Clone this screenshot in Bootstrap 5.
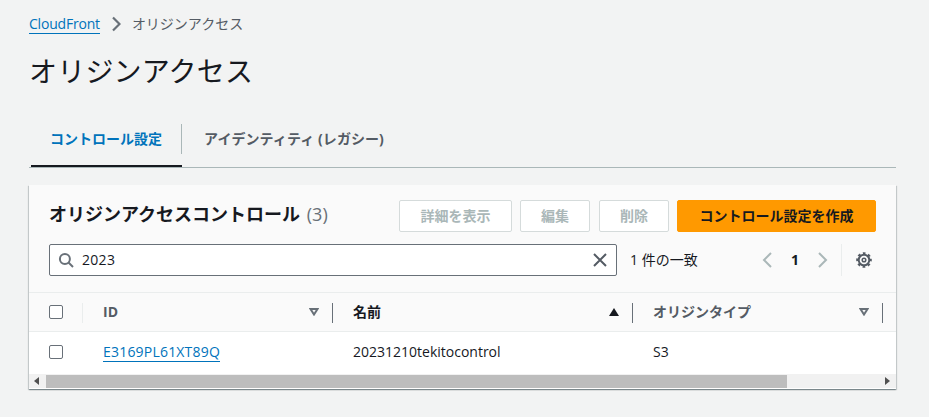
<!doctype html>
<html lang="ja"><head><meta charset="utf-8"><title>オリジンアクセス</title>
<link href="https://cdn.jsdelivr.net/npm/bootstrap@5.3.0/dist/css/bootstrap.min.css" rel="stylesheet">
<style>
html,body{height:417px;overflow:hidden}
body{background:#f2f3f3;color:#16191f;font:14px/20px "Open Sans","Noto Sans CJK JP",sans-serif}
a{color:#0073bb;text-decoration:none}
.wrap{padding:14px 33px 0 29px}
.crumbs{height:20px;display:flex;align-items:center;gap:11px;color:#545b64}
.crumbs a{border-bottom:1px solid #0073bb;line-height:19px;height:20px;letter-spacing:-.2px}
.ttl{font-size:28px;line-height:36px;font-weight:400;margin:19px 0 0;color:#16191f;letter-spacing:.2px}
.tabbar{margin-top:29px;height:50px;border-bottom:1px solid #aab7b8;display:flex;align-items:stretch}
.tabi{font-weight:700;color:#545b64;display:flex;align-items:flex-start;padding-top:11px;height:50px;position:relative;font-size:14px}
.tabi.on{color:#0073bb;margin-left:2px;width:151px;padding-left:19px;border-bottom:2px solid #16191f;height:49px}
.tabi.on::after{content:"";position:absolute;right:0;top:6px;height:30px;border-right:1px solid #aab7b8}
.tabi.off{padding-left:22px;letter-spacing:.08px}
.panel{margin-top:17px;background:#fff;box-shadow:0 1px 1px 0 rgba(0,28,36,.3),1px 1px 1px 0 rgba(0,28,36,.15),-1px 1px 1px 0 rgba(0,28,36,.15);height:204px;overflow:hidden}
.phead{background:#fafafa;height:108px;padding:15px 20px 0;border-bottom:1px solid #eaeded}
.toprow{display:flex;justify-content:space-between;align-items:flex-start;height:33px}
.ptitle{font-size:18px;font-weight:700;line-height:24px;margin:2px 0 0}
.ptitle span{font-weight:400;color:#687078;margin-left:2px}
.awsbtn{height:32px;padding:0 20px;font-size:14px;font-weight:700;border-radius:2px;border:1px solid #d5dbdb;background:#fff;color:#aab7b8;line-height:20px;--bs-btn-disabled-opacity:1;--bs-btn-disabled-bg:#fff;--bs-btn-disabled-border-color:#d5dbdb;--bs-btn-disabled-color:#aab7b8}
.awsbtn.wide{padding:0 20.5px}
.awsbtn.prim{background:#ff9900;border-color:#ff9900;color:#16191f;padding:0 21.5px;--bs-btn-hover-bg:#ec7211;--bs-btn-hover-border-color:#ec7211}
.btnset{display:flex;gap:8px}
.btnset .awsbtn:nth-child(3){margin-left:1px}
.findrow{display:flex;align-items:center;margin-top:11px;height:32px}
.findbox{flex:none;width:568px;height:32px;border:1px solid #687078;border-radius:2px;background:#fff;display:flex;align-items:center;padding:0 8px}
.findbox input{border:0;outline:0;flex:1;font:inherit;color:#16191f;padding:0 0 0 8px;background:transparent;min-width:0;letter-spacing:.3px}
.matches{flex:none;margin-left:13px;width:131px}
.pager{flex:none;display:flex;align-items:center;width:80px;justify-content:space-between;padding-right:12px;font-weight:700;font-size:14px}
.cog{flex:none;border-left:1px solid #eaeded;height:32px;width:44px;display:flex;align-items:center;justify-content:center}
.gridhead,.gridrow{display:grid;grid-template-columns:54px 250px 300px 250px 13px;width:867px}
.gridhead{background:#fafafa;height:39px;border-bottom:1px solid #eaeded}
.gridrow{height:41px;background:#fff;padding-bottom:2px}
.hc{display:flex;align-items:center;position:relative;padding-left:20px;font-weight:700;color:#545b64}
.hc.dark{color:#16191f}
.hc::after{content:"";position:absolute;right:0;top:10px;height:20px;border-right:1px solid #687078}
.hc.box::after{border-color:#eaeded}
.hc.last::after{display:none}
.hc svg{position:absolute;right:14px;top:15px}
.dc{display:flex;align-items:center;padding-left:20px;white-space:nowrap}
.dc a{border-bottom:1px solid #0073bb;line-height:19px;letter-spacing:.2px}
.tick{width:14px;height:14px;border:1px solid #687078;border-radius:2px;background:#fff;display:block}
.sbar{background:#f1f1f1;display:flex;align-items:center;border-top:1px solid #fff;box-sizing:content-box;height:14px}
.sbar .end{width:17px;padding-right:2px;display:flex;align-items:center;justify-content:center}
.sbar .thumb{height:13px;background:#bdbdbd;width:741px}
.sbar .rest{flex:1}
</style></head><body>
<div class="wrap">
 <nav class="crumbs"><a href="#">CloudFront</a>
  <svg width="10" height="16" viewBox="0 0 10 16" fill="none" stroke="#687078" stroke-width="2.200"><path d="M2 1.500L8.500 8 2 14.500"/></svg>
  <span>オリジンアクセス</span></nav>
 <h1 class="ttl">オリジンアクセス</h1>
 <div class="tabbar"><div class="tabi on">コントロール設定</div><div class="tabi off">アイデンティティ (レガシー)</div></div>
 <section class="panel">
  <div class="phead">
   <div class="toprow"><h2 class="ptitle">オリジンアクセスコントロール <span>(3)</span></h2>
    <div class="btnset"><button class="btn awsbtn wide" disabled>詳細を表示</button><button class="btn awsbtn" disabled>編集</button><button class="btn awsbtn" disabled>削除</button><button class="btn awsbtn prim">コントロール設定を作成</button></div></div>
   <div class="findrow">
    <div class="findbox">
     <svg width="16" height="16" viewBox="0 0 16 16" fill="none" stroke="#687078" stroke-width="2"><circle cx="6.900" cy="6.900" r="5"/><path d="M10.500 10.500L15 15"/></svg>
     <input type="text" value="2023" aria-label="検索">
     <svg width="16" height="16" viewBox="0 0 16 16" fill="none" stroke="#545b64" stroke-width="2"><path d="M2 2l12 12M14 2L2 14"/></svg>
    </div>
    <span class="matches">1 件の一致</span>
    <div class="pager">
     <svg width="14" height="16" viewBox="0 0 14 16" fill="none" stroke="#aab7b8" stroke-width="2"><path d="M10 1L3 8l7 7"/></svg>
     <span>1</span>
     <svg width="14" height="16" viewBox="0 0 14 16" fill="none" stroke="#aab7b8" stroke-width="2"><path d="M4 1l7 7-7 7"/></svg>
    </div>
    <div class="cog"><svg width="16" height="16" viewBox="0 0 16 16" fill="none" stroke="#545b64"><circle cx="8" cy="8" r="5.300" stroke-width="2"/><circle cx="8" cy="8" r="6.800" stroke-width="2" stroke-dasharray="2.700 2.640" stroke-dashoffset="1.350"/><circle cx="8" cy="8" r="1.800" stroke-width="1.500"/></svg></div>
   </div>
  </div>
  <div class="gridhead">
   <div class="hc box"><span class="tick"></span></div>
   <div class="hc">ID<svg width="10" height="8" viewBox="0 0 10 8" fill="none" stroke="#687078" stroke-width="2"><path d="M1.500 1h7L5 6.500z"/></svg></div>
   <div class="hc dark">名前<svg width="10" height="8" viewBox="0 0 10 8" fill="#16191f"><path d="M5 0l5 8H0z"/></svg></div>
   <div class="hc">オリジンタイプ<svg width="10" height="8" viewBox="0 0 10 8" fill="none" stroke="#687078" stroke-width="2"><path d="M1.500 1h7L5 6.500z"/></svg></div>
   <div class="hc last"></div>
  </div>
  <div class="gridrow">
   <div class="dc"><span class="tick"></span></div>
   <div class="dc"><a href="#">E3169PL61XT89Q</a></div>
   <div class="dc">20231210tekitocontrol</div>
   <div class="dc">S3</div><div></div>
  </div>
  <div class="sbar">
   <div class="end"><svg width="6" height="8" viewBox="0 0 6 8" fill="#505050"><path d="M5 0v8L0 4z"/></svg></div>
   <div class="thumb"></div><div class="rest"></div>
   <div class="end"><svg width="6" height="8" viewBox="0 0 6 8" fill="#505050"><path d="M1 0v8l5-4z"/></svg></div>
  </div>
 </section>
</div>
<script src="https://cdn.jsdelivr.net/npm/bootstrap@5.3.0/dist/js/bootstrap.bundle.min.js"></script>
</body></html>
